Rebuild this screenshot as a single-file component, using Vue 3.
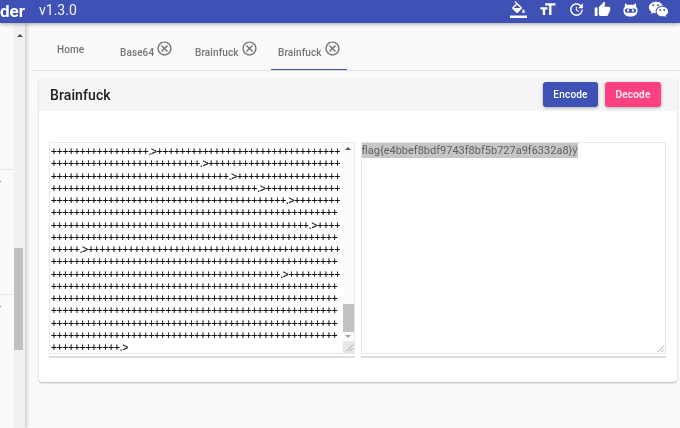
<script setup>
const row = (a, b) => '+'.repeat(a) + (b === undefined ? '' : '.>' + '+'.repeat(b))
const lines = [
  row(17, 32), row(26, 23), row(31, 18), row(36, 13), row(41, 8), row(50),
  row(45, 4), row(50), row(5, 44), row(50), row(40, 9), row(50), row(50),
  row(50), row(50), row(50), row(12, 0),
]
const tabs = [
  { label: 'Base64' },
  { label: 'Brainfuck' },
  { label: 'Brainfuck', active: true },
]
const closePath = 'M12 2C6.47 2 2 6.47 2 12s4.47 10 10 10 10-4.47 10-10S17.53 2 12 2zm0 18c-4.41 0-8-3.59-8-8s3.59-8 8-8 8 3.59 8 8-3.59 8-8 8zm3.59-13L12 10.59 8.41 7 7 8.41 10.59 12 7 15.59 8.41 17 12 13.41 15.59 17 17 15.59 13.41 12 17 8.41z'
</script>

<template>
  <div class="page">
    <header class="bar">
      <span class="brand">der</span>
      <span class="version">v1.3.0</span>
      <div class="icons">
        <svg class="ic bucket" viewBox="0 0 24 24"><path d="M19,11.5C19,11.5 17,13.67 17,15A2,2 0 0,0 19,17A2,2 0 0,0 21,15C21,13.67 19,11.5 19,11.5M5.21,10L10,5.21L14.79,10M16.56,8.94L7.62,0L6.21,1.41L8.59,3.79L3.44,8.94C2.85,9.5 2.85,10.47 3.44,11.06L8.94,16.56C9.23,16.85 9.62,17 10,17C10.38,17 10.77,16.85 11.06,16.56L16.56,11.06C17.15,10.47 17.15,9.5 16.56,8.94Z"/><path d="M0 20.5h24V24H0z"/></svg>
        <svg class="ic size" viewBox="0 0 24 24"><path d="M9 4v3h5v12h3V7h5V4H9zm-6 8h3v7h3v-7h3V9H3v3z"/></svg>
        <svg class="ic clock" viewBox="0 0 24 24"><path d="M21 10.12h-6.78l2.74-2.82c-2.73-2.7-7.15-2.8-9.88-.1-2.73 2.71-2.73 7.08 0 9.79s7.15 2.71 9.88 0C18.32 15.65 19 14.08 19 12.1h2c0 1.98-.88 4.55-2.64 6.29-3.51 3.48-9.21 3.48-12.72 0-3.5-3.47-3.53-9.11-.02-12.58s9.14-3.47 12.65 0L21 3v7.12zM12.5 8v4.25l3.5 2.08-.72 1.21L11 13V8h1.5z"/></svg>
        <svg class="ic thumb" viewBox="0 0 24 24"><path d="M1 21h4V9H1v12zm22-11c0-1.1-.9-2-2-2h-6.31l.95-4.57.03-.32c0-.41-.17-.79-.44-1.06L14.17 1 7.59 7.59C7.22 7.95 7 8.45 7 9v10c0 1.1.9 2 2 2h9c.83 0 1.54-.5 1.84-1.22l3.02-7.05c.09-.23.14-.47.14-.73v-2z"/></svg>
        <svg class="ic cat" viewBox="0 0 24 24"><path fill-rule="evenodd" d="M4.500 3l3.800 2.600C10.500 5.100 13.500 5.100 15.700 5.600L19.500 3c.6 1.800.7 3.500.4 5 1.300 1.200 2.100 2.900 2.100 5 0 6-4 9-10 9S2 19 2 13c0-2.100.8-3.800 2.100-5-.3-1.500-.2-3.200.4-5zM7 10.500c-1.700 0-3 1.200-3 3s1.300 3 3 3h10c1.700 0 3-1.200 3-3s-1.300-3-3-3c-1.700 0-3.200.4-5 .4s-3.300-.4-5-.4zM8.500 11.800a1.500 1.700 0 1 1 0 3.400 1.500 1.700 0 0 1 0-3.400zm7 0a1.500 1.700 0 1 1 0 3.400 1.500 1.700 0 0 1 0-3.400z"/></svg>
        <svg class="ic chat" viewBox="0 0 24 24"><path d="M9.5,4C5.36,4 2,6.69 2,10C2,11.89 3.08,13.56 4.78,14.66L4,17L6.5,15.5C7.39,15.81 8.37,16 9.41,16C9.15,15.37 9,14.7 9,14C9,10.69 12.13,8 16,8C16.19,8 16.38,8 16.56,8.03C15.54,5.69 12.78,4 9.5,4M6.5,6.5A1,1 0 0,1 7.5,7.5A1,1 0 0,1 6.5,8.5A1,1 0 0,1 5.5,7.5A1,1 0 0,1 6.5,6.5M11.5,6.5A1,1 0 0,1 12.5,7.5A1,1 0 0,1 11.5,8.5A1,1 0 0,1 10.5,7.5A1,1 0 0,1 11.5,6.5M16,9C12.69,9 10,11.24 10,14C10,16.76 12.69,19 16,19C16.67,19 17.31,18.92 17.91,18.75L20,20L19.38,18.13C21,17.22 22,15.71 22,14C22,11.24 19.31,9 16,9M14,11.5A1,1 0 0,1 15,12.5A1,1 0 0,1 14,13.5A1,1 0 0,1 13,12.5A1,1 0 0,1 14,11.5M18,11.5A1,1 0 0,1 19,12.5A1,1 0 0,1 18,13.5A1,1 0 0,1 17,12.5A1,1 0 0,1 18,11.5Z"/></svg>
      </div>
    </header>

    <div class="body">
      <aside class="side">
        <div class="side-list">
          <div class="sec sec-a"><i class="tick"></i></div>
          <div class="sec sec-b"><i class="tick"></i></div>
        </div>
        <div class="side-scroll">
          <span class="arrow up"></span>
          <div class="side-thumb"></div>
        </div>
      </aside>

      <main class="main">
        <nav class="tabs">
          <div class="tab home">Home</div>
          <div v-for="(t, i) in tabs" :key="i" class="tab" :class="{ active: t.active }">
            <span class="tab-label">{{ t.label }}</span>
            <svg class="close" viewBox="0 0 24 24"><path :d="closePath"/></svg>
          </div>
        </nav>

        <section class="card">
          <div class="card-head">
            <h2>Brainfuck</h2>
            <div class="btns">
              <button class="btn enc">Encode</button>
              <button class="btn dec">Decode</button>
            </div>
          </div>
          <div class="panes">
            <div class="field">
              <div class="box">
                <div class="code">
                  <div v-for="(l, i) in lines" :key="i" class="ln">{{ l }}</div>
                </div>
                <div class="sb">
                  <span class="arrow up"></span>
                  <div class="sb-track"><div class="sb-thumb"></div></div>
                  <span class="arrow down"></span>
                  <div class="sb-corner">
                    <svg viewBox="0 0 12 12" class="grip"><path d="M11 4L4 11M11 8L8 11" stroke="#9e9e9e" fill="none"/></svg>
                  </div>
                </div>
              </div>
            </div>
            <div class="field">
              <div class="box right">
                <div class="out"><span class="sel">flag{e4bbef8bdf9743f8bf5b727a9f6332a8}ÿ</span></div>
                <svg viewBox="0 0 12 12" class="grip abs"><path d="M11 4L4 11M11 8L8 11" stroke="#9e9e9e" fill="none"/></svg>
              </div>
            </div>
          </div>
        </section>
      </main>
    </div>
  </div>
</template>

<style>
html, body { margin: 0; background: #fafafa; }
</style>

<style scoped>
.page {
  width: 680px; height: 428px; overflow: hidden; background: #fafafa;
  display: flex; flex-direction: column;
  font-family: Roboto, "Liberation Sans", sans-serif;
  filter: blur(.35px);
}
.bar {
  height: 23px; flex: none; background: #3f51b5; color: #fff;
  display: flex; align-items: center; position: relative; z-index: 2;
  box-shadow: 0 1px 4px rgba(0,0,0,.35);
}
.brand { font-size: 17px; font-weight: 700; width: 39px; line-height: 20px; margin-top: -2px; }
.version { font-size: 14px; line-height: 18px; margin-top: -4px; color: #f0f1fa; }
.icons { margin-left: auto; display: flex; align-items: center; height: 23px; }
.ic { fill: #fff; display: block; margin-top: -5px; flex: none; }
.bucket { width: 17px; height: 17px; }
.size { width: 19px; height: 19px; margin-left: 11px; }
.clock { width: 17px; height: 17px; margin-left: 11px; }
.thumb { width: 17px; height: 17px; margin-left: 9px; }
.cat { width: 17px; height: 17px; margin-left: 11px; }
.chat { width: 23px; height: 23px; margin-left: 8px; margin-right: 10px; }

.body { flex: 1; display: flex; min-height: 0; }
.side {
  width: 25px; flex: none; display: flex; background: #fff; position: relative; z-index: 1;
  box-shadow: 2px 0 4px rgba(0,0,0,.2);
}
.side-list { width: 14px; background: #fafafa; }
.sec { position: relative; }
.sec-a { height: 146px; border-bottom: 1px solid #e6e6e6; }
.sec-b { height: 124px; border-bottom: 1px solid #e6e6e6; }
.tick { position: absolute; left: 0; bottom: -13px; width: 1px; height: 1px; background: #888; }
.side-scroll { width: 11px; background: #f1f1f1; padding-top: 11px; display: flex; flex-direction: column; align-items: center; box-sizing: border-box; }
.side-thumb { width: 9px; height: 102px; background: #c1c1c1; margin: 211px 2px 0 0; }
.arrow { width: 0; height: 0; border-left: 3px solid transparent; border-right: 3px solid transparent; flex: none; }
.arrow.up { border-bottom: 3px solid #505050; }
.arrow.down { border-top: 3px solid #a3a3a3; }

.main { flex: 1; min-width: 0; padding: 0 0 0 7px; }
.tabs {
  height: 48px; box-sizing: border-box; display: flex; align-items: stretch; padding-left: 7px;
  border-bottom: 1px solid #e0e0e0;
}
.tab {
  display: flex; align-items: flex-start; font-size: 10px; font-weight: 500; color: #757575;
  padding: 17px 0 0 7px; box-sizing: border-box; position: relative; flex: none;
  letter-spacing: .1px;
}
.tab.home { width: 81px; padding: 21px 0 0 18px; letter-spacing: .1px; }
.tab:nth-child(2) { width: 75px; padding-left: 0; }
.tab:nth-child(3) { width: 76px; padding-left: 0; }
.tab-label { margin-top: 7px; }
.close { width: 17px; height: 17px; fill: #757575; margin-left: 2px; flex: none; }
.tab.active { width: 76px; padding-left: 7px; }
.tab.active::after {
  content: ""; position: absolute; left: 0; right: 0; bottom: 0; height: 1px; background: #3f51b5;
}

.card {
  margin: 7px 3px 0 7px; height: 304px; box-sizing: border-box; background: #fff;
  border-radius: 3px; box-shadow: 0 1px 2px rgba(0,0,0,.28);
}
.card-head {
  height: 33px; background: #f5f5f5; display: flex; align-items: center; justify-content: space-between;
  padding: 0 16px 0 11px; border-radius: 3px 3px 0 0;
}
h2 { margin: 0; font-size: 14px; font-weight: 500; color: #212121; letter-spacing: .1px; }
.btns { display: flex; gap: 7px; }
.btn {
  height: 25px; border: 0; border-radius: 3px; color: #fff; font: 500 10px Roboto, sans-serif;
  letter-spacing: .2px; padding: 0; box-shadow: 0 1px 3px rgba(0,0,0,.3);
}
.enc { width: 55px; background: #3f51b5; }
.dec { width: 56px; background: #ff4081; }
.panes { display: flex; gap: 6px; padding: 31px 11px 0 10px; }
.field { flex: 1; min-width: 0; padding-bottom: 2px; border-bottom: 2px solid #dcdcdc; }
.box {
  height: 212px; box-sizing: border-box; border: 1px solid #e8e8e8;
  display: flex; position: relative; overflow: hidden;
}
.code {
  flex: 1; min-width: 0; padding: 3px 0 0 1px; overflow: hidden;
  font: 400 10px/12.25px "Liberation Sans", Arial, sans-serif; color: #111;
  letter-spacing: -.11px; -webkit-text-stroke: .2px #111;
}
.ln { white-space: pre; }
.sb { width: 11px; flex: none; background: #fbfbfb; display: flex; flex-direction: column; align-items: center; padding-top: 4px; }
.sb-track { flex: 1; width: 100%; display: flex; flex-direction: column; justify-content: flex-end; padding-bottom: 3px; }
.sb-thumb { height: 28px; background: #c1c1c1; }
.sb-corner { width: 100%; height: 12px; margin-top: 3px; background: #e8e8e8; }
.grip { width: 11px; height: 11px; display: block; }
.grip.abs { position: absolute; right: 0; bottom: 0; }
.right { display: block; }
.out { font: 400 11px/15px Roboto, sans-serif; color: #616161; }
.sel { background: #c6c6c6; display: inline-block; }
</style>
